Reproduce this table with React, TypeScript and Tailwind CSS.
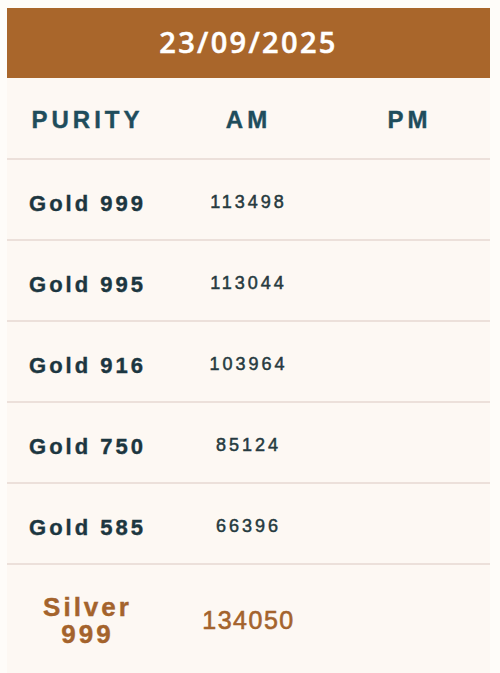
const rows = [
  { purity: "Gold 999", am: "113498", pm: "" },
  { purity: "Gold 995", am: "113044", pm: "" },
  { purity: "Gold 916", am: "103964", pm: "" },
  { purity: "Gold 750", am: "85124", pm: "" },
  { purity: "Gold 585", am: "66396", pm: "" },
]

export default function App() {
  return (
    <div className="h-[673px] w-[500px] overflow-hidden bg-[#fefcf9] pl-[7px] pt-[8px] font-['Liberation_Sans',Arial,sans-serif]">
      <div className="w-[483px] bg-[#fdf8f3]">
        <div className="flex h-[70px] items-center justify-center bg-[#a9662b]">
          <span className="pb-[2px] font-['Open_Sans',sans-serif] text-[29px] font-semibold tracking-[2.3px] text-white [-webkit-text-stroke:0.5px_#ffffff]">
            23/09/2025
          </span>
        </div>

        <div className="grid h-[82px] grid-cols-3 items-center border-b-2 border-[#ece0da] text-center text-[24px] font-bold tracking-[4px] text-[#1f4d5c] [-webkit-text-stroke:0.4px_#1f4d5c]">
          <span className="pt-[4px]">PURITY</span>
          <span className="pt-[4px]">AM</span>
          <span className="pt-[4px]">PM</span>
        </div>

        {rows.map((row) => (
          <div
            key={row.purity}
            className="grid h-[81px] grid-cols-3 items-center border-b-2 border-[#ece0da] text-center"
          >
            <span className="pt-[8px] text-[22px] font-bold tracking-[3px] text-[#1c3640] [-webkit-text-stroke:0.4px_#1c3640]">
              {row.purity}
            </span>
            <span className="pt-[6px] text-[18px] tracking-[3px] text-[#263a40] [-webkit-text-stroke:0.5px_#263a40]">
              {row.am}
            </span>
            <span className="pt-[6px] text-[18px] tracking-[3px] text-[#263a40] [-webkit-text-stroke:0.5px_#263a40]">
              {row.pm}
            </span>
          </div>
        ))}

        <div className="grid h-[115px] grid-cols-3 items-center text-center text-[#a4632c]">
          <span className="pb-[4px] text-[26px] font-bold leading-[27px] tracking-[3px] [-webkit-text-stroke:0.4px_#a4632c]">
            Silver
            <br />
            999
          </span>
          <span className="pb-[4px] text-[25px] tracking-[1.5px] [-webkit-text-stroke:0.6px_#a4632c]">
            134050
          </span>
          <span />
        </div>
      </div>
    </div>
  )
}
